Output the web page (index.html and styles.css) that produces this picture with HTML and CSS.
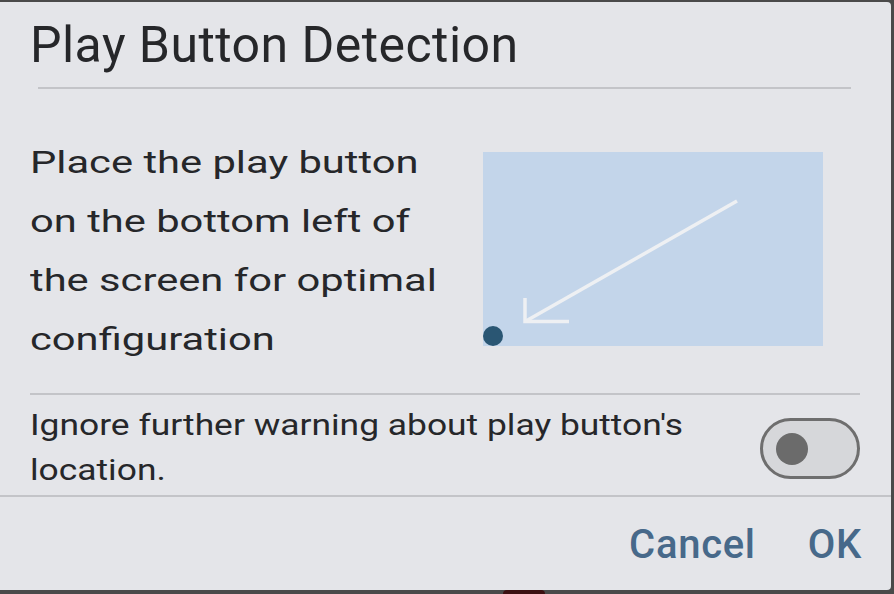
FILE: index.html
```html
<!DOCTYPE html>
<html lang="en">
<head>
<meta charset="utf-8">
<title>Play Button Detection</title>
<link rel="stylesheet" href="styles.css">
</head>
<body>
<div class="screen">
  <div class="dialog">
    <h1 class="title">Play Button Detection</h1>
    <div class="divider divider-title"></div>
    <div class="content">
      <p class="message">Place the play button<br>on the bottom left of<br>the screen for optimal<br>configuration</p>
      <div class="preview">
        <svg class="arrow" width="340" height="194" viewBox="0 0 340 194">
          <line x1="254" y1="49" x2="43" y2="169" stroke="#eef0f3" stroke-width="3.5" stroke-linecap="butt"/>
          <polyline points="42,146 42,169.5 86,169.5" fill="none" stroke="#eef0f3" stroke-width="3.5"/>
          <circle cx="10" cy="184" r="10" fill="#2a5673"/>
        </svg>
      </div>
    </div>
    <div class="divider divider-body"></div>
    <div class="option">
      <p class="option-text">Ignore further warning about play button's<br>location.</p>
      <div class="toggle"><span class="knob"></span></div>
    </div>
    <div class="divider divider-full"></div>
    <div class="actions">
      <span class="btn">Cancel</span>
      <span class="btn">OK</span>
    </div>
  </div>
  <div class="taskbar-mark"></div>
</div>
</body>
</html>
```

FILE: styles.css
```css
html, body {
  margin: 0;
  padding: 0;
  background: #4a4a4a;
}
body {
  width: 894px;
  height: 594px;
  overflow: hidden;
  font-family: Roboto, "Noto Sans", sans-serif;
}
.screen {
  position: relative;
  width: 894px;
  height: 594px;
  padding-top: 2px;
  box-sizing: border-box;
}
.dialog {
  width: 891px;
  height: 588px;
  background: #e4e5e9;
  border-radius: 0 4px 4px 0;
  display: flex;
  flex-direction: column;
  color: #26272a;
}
.title {
  margin: 0;
  padding: 14px 0 0 30px;
  font-size: 50px;
  font-weight: 400;
  line-height: 58px;
  height: 58px;
  letter-spacing: 0.45px;
}
.divider {
  height: 2px;
  background: #c3c4c8;
}
.divider-title {
  margin: 13px 40px 0 38px;
}
.content {
  display: flex;
  align-items: flex-start;
  height: 304px;
}
.message {
  margin: 44px 0 0 30px;
  width: 453px;
  flex: none;
  font-size: 31px;
  line-height: 59px;
  white-space: nowrap;
  transform: scaleX(1.345);
  transform-origin: left top;
}
.preview {
  margin-top: 63px;
  width: 340px;
  height: 194px;
  background: #c3d5ea;
}
.arrow {
  display: block;
}
.divider-body {
  margin: 0 31px 0 30px;
}
.option {
  display: flex;
  align-items: flex-start;
  justify-content: space-between;
  height: 100px;
  padding: 0 31px 0 30px;
}
.option-text {
  margin: 8px 0 0 0;
  font-size: 29px;
  line-height: 45px;
  white-space: nowrap;
  transform: scaleX(1.22);
  transform-origin: left top;
}
.toggle {
  margin-top: 23px;
  width: 100px;
  height: 61px;
  box-sizing: border-box;
  border: 3px solid #6e6e6e;
  border-radius: 31px;
  background: #d6d7da;
  position: relative;
}
.knob {
  position: absolute;
  left: 13px;
  top: 12px;
  width: 32px;
  height: 32px;
  border-radius: 50%;
  background: #6b6b6b;
}
.divider-full {
  margin: 0;
}
.actions {
  display: flex;
  justify-content: flex-end;
  gap: 52px;
  padding: 24px 29px 0 0;
}
.btn {
  font-size: 40px;
  font-weight: 500;
  line-height: 48px;
  letter-spacing: 0.7px;
  color: #47698a;
}
.taskbar-mark {
  position: absolute;
  left: 503px;
  bottom: 0;
  width: 42px;
  height: 4px;
  background: #3d1012;
  border-radius: 6px 6px 0 0;
}
```
